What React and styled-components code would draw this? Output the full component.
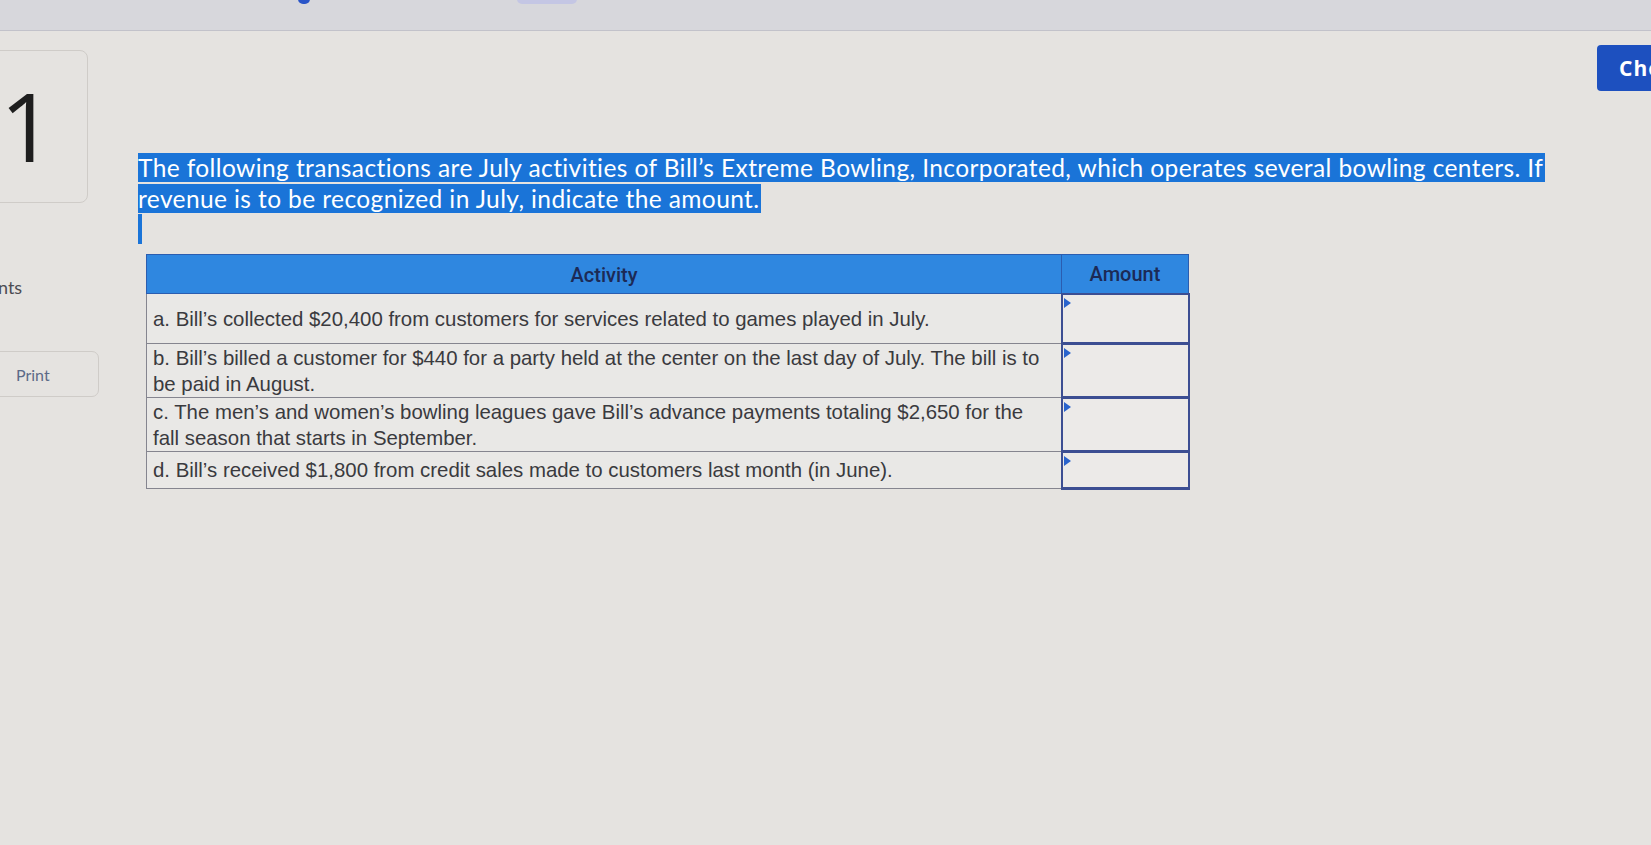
import React from 'react';
import styled, { createGlobalStyle } from 'styled-components';

const GlobalStyle = createGlobalStyle`
  html, body {
    margin: 0;
    padding: 0;
    background: #e5e3e0;
    overflow: hidden;
  }
  * { box-sizing: border-box; }
`;

const TopBar = styled.div`
  position: relative;
  height: 31px;
  background: #d7d7dc;
  border-bottom: 1px solid #c2c2ca;
`;

const TopDot = styled.span`
  position: absolute;
  top: -6px;
  left: ${({ left }) => left}px;
  width: ${({ w }) => w}px;
  height: 10px;
  border-radius: 6px;
  background: ${({ color }) => color};
`;

const Layout = styled.div`
  display: flex;
  align-items: flex-start;
`;

const Sidebar = styled.aside`
  width: 138px;
  flex-shrink: 0;
  display: flex;
  flex-direction: column;
  font-family: 'Lato', 'Liberation Sans', sans-serif;
`;

const NumberCard = styled.div`
  margin-top: 19px;
  margin-left: -30px;
  width: 118px;
  height: 153px;
  border: 1px solid #cfccc8;
  border-radius: 8px;
  padding: 27px 0 0 29px;
  font-family: 'Open Sans', 'Liberation Sans', sans-serif;
  font-size: 95px;
  font-weight: 500;
  line-height: 1;
  color: #1e1e1e;
`;

const PointsLabel = styled.div`
  margin-top: 74px;
  margin-left: -2px;
  font-size: 18px;
  line-height: 20px;
  color: #4c4c52;
`;

const PrintButton = styled.div`
  margin-top: 54px;
  margin-left: -30px;
  width: 129px;
  height: 46px;
  border: 1px solid #cfccc8;
  border-radius: 7px;
  display: flex;
  align-items: center;
  padding-left: 45px;
  font-size: 16px;
  color: #5b6987;
`;

const Main = styled.main`
  flex: 1;
  padding-top: 121px;
`;

const Question = styled.p`
  margin: 0;
  font-family: 'Lato', 'Open Sans', sans-serif;
  font-size: 24.5px;
  letter-spacing: 0.4px;
  line-height: 31px;
  color: #ffffff;
`;

const Selected = styled.span`
  background: #1a74d8;
  padding-right: 2px;
`;

const SelectionTail = styled.div`
  width: 4px;
  height: 30px;
  background: #1a74d8;
`;

const Table = styled.table`
  margin: 10px 0 0 8px;
  border-collapse: collapse;
  font-family: 'Liberation Sans', Arial, sans-serif;
  color: #3a3a3e;
`;

const HeadCell = styled.th`
  height: 39px;
  width: ${({ w }) => w}px;
  background: #2f87e0;
  border: 1px solid #2b5db0;
  font-family: 'Roboto', 'Liberation Sans', sans-serif;
  font-weight: 500;
  font-size: 20px;
  color: #1c2a56;
  text-align: center;
  vertical-align: ${({ top }) => (top ? 'top' : 'middle')};
  padding-top: ${({ top }) => (top ? '7px' : '3px')};
`;

const ActivityCell = styled.td`
  height: ${({ h }) => h}px;
  border: 1px solid #85858f;
  padding: 0 8px 0 6px;
  font-size: 20.4px;
  line-height: 26px;
  vertical-align: middle;
  background: #e9e8e6;
`;

const AmountCell = styled.td`
  position: relative;
  padding: 0;
  border: 2px solid #3c4e92;
  border-bottom-width: 3px;
  background: #eceae8;
`;

const Marker = styled.span`
  position: absolute;
  top: 3px;
  left: 1px;
  width: 0;
  height: 0;
  border-top: 5px solid transparent;
  border-bottom: 5px solid transparent;
  border-left: 7px solid #2a63cc;
`;

const RightRail = styled.div`
  width: 54px;
  flex-shrink: 0;
  overflow: hidden;
  padding-top: 14px;
`;

const CheckButton = styled.div`
  width: 200px;
  height: 46px;
  background: #1d50bf;
  border-radius: 4px;
  display: flex;
  align-items: center;
  padding-left: 22px;
  font-family: 'Open Sans', 'Liberation Sans', sans-serif;
  font-weight: 700;
  font-size: 21px;
  letter-spacing: 1px;
  color: #ffffff;
  white-space: nowrap;
`;

const rows = [
  { h: 50, text: 'a. Bill’s collected $20,400 from customers for services related to games played in July.' },
  { h: 54, text: 'b. Bill’s billed a customer for $440 for a party held at the center on the last day of July. The bill is to be paid in August.' },
  { h: 54, text: 'c. The men’s and women’s bowling leagues gave Bill’s advance payments totaling $2,650 for the fall season that starts in September.' },
  { h: 37, text: 'd. Bill’s received $1,800 from credit sales made to customers last month (in June).' },
];

export default function App() {
  return (
    <>
      <GlobalStyle />
      <TopBar>
        <TopDot left={298} w={12} color="#2a55c8" />
        <TopDot left={517} w={60} color="#c4c6e4" />
      </TopBar>
      <Layout>
        <Sidebar>
          <NumberCard>1</NumberCard>
          <PointsLabel>nts</PointsLabel>
          <PrintButton>Print</PrintButton>
        </Sidebar>
        <Main>
          <Question>
            <Selected>
              The following transactions are July activities of Bill’s Extreme Bowling, Incorporated, which operates several bowling centers. If
            </Selected>
            <br />
            <Selected>revenue is to be recognized in July, indicate the amount.</Selected>
          </Question>
          <SelectionTail />
          <Table>
            <thead>
              <tr>
                <HeadCell w={915}>Activity</HeadCell>
                <HeadCell w={127} top>Amount</HeadCell>
              </tr>
            </thead>
            <tbody>
              {rows.map((row) => (
                <tr key={row.text}>
                  <ActivityCell h={row.h}>{row.text}</ActivityCell>
                  <AmountCell>
                    <Marker />
                  </AmountCell>
                </tr>
              ))}
            </tbody>
          </Table>
        </Main>
        <RightRail>
          <CheckButton>Check my work</CheckButton>
        </RightRail>
      </Layout>
    </>
  );
}
